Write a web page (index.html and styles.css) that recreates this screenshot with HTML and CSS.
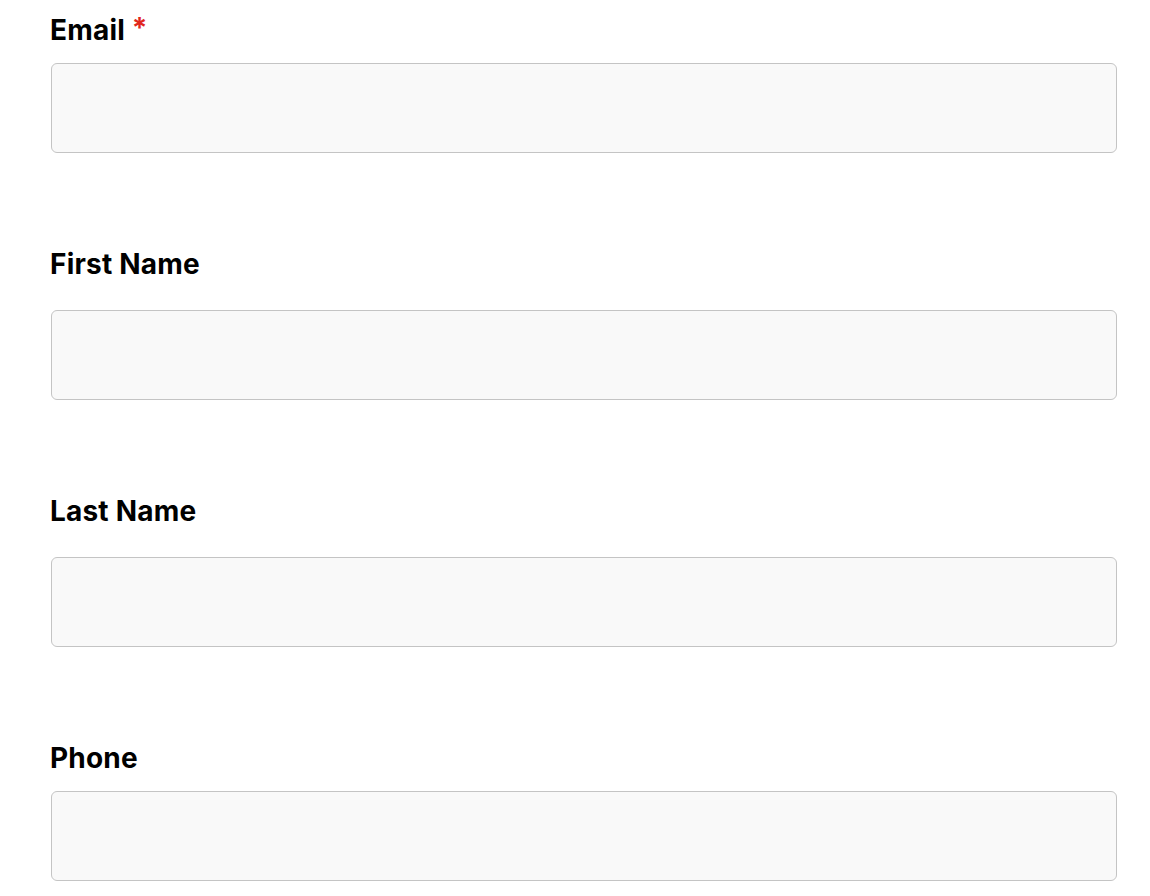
FILE: index.html
```html
<!DOCTYPE html>
<html>
    <head>
        <title>Sign up</title>
        <meta charset="UTF-8">
        <link rel="stylesheet" href="styles.css">
    </head>
    <body>
        <form class="signup" action="#">
            <div class="field field-compact">
                <label for="email">Email <span class="required">*</span></label>
                <input type="email" id="email" name="email"/>
            </div>
            <div class="field">
                <label for="first_name">First Name</label>
                <input type="text" id="first_name" name="first_name"/>
            </div>
            <div class="field">
                <label for="last_name">Last Name</label>
                <input type="text" id="last_name" name="last_name"/>
            </div>
            <div class="field field-compact">
                <label for="phone">Phone</label>
                <input type="tel" id="phone" name="phone"/>
            </div>
        </form>
    </body>
</html>
```

FILE: styles.css
```css
body {
    margin: 0;
    background-color: white;
    font-family: Inter, "Noto Sans", sans-serif;
    color: black;
}
form.signup {
    padding: 14px 33px 0 50px;
    display: flex;
    flex-direction: column;
    gap: 95px;
}
.field {
    display: flex;
    flex-direction: column;
    gap: 30px;
}
.field-compact {
    gap: 17px;
}
label {
    font-size: 28px;
    font-weight: 700;
    line-height: 32px;
    height: 32px;
    letter-spacing: 0.2px;
}
.required {
    color: #e1261c;
    font-size: 28px;
    line-height: 0;
    vertical-align: 2px;
}
input {
    margin-left: 1px;
    height: 90px;
    box-sizing: border-box;
    border: 1px solid #c4c4c4;
    border-radius: 6px;
    background-color: #f9f9f9;
    font-family: Inter, "Noto Sans", sans-serif;
    font-size: 18px;
    padding: 0 16px;
    outline-width: 0;
}
```
